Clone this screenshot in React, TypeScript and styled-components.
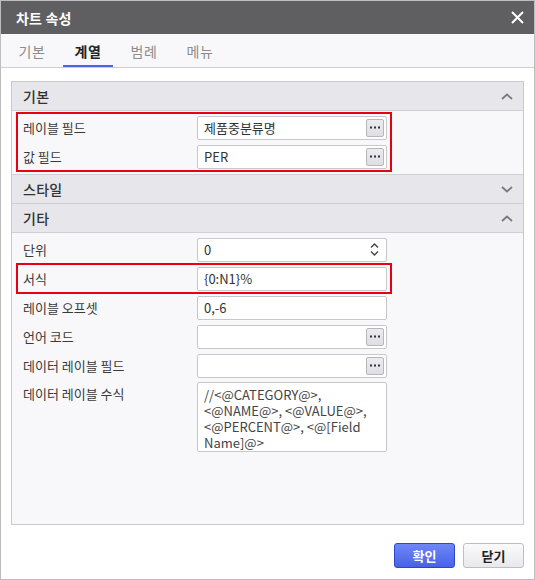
import React from "react";
import styled, { createGlobalStyle } from "styled-components";

const GlobalStyle = createGlobalStyle`
  html, body { margin: 0; padding: 0; background: #ffffff; }
  body { font-family: "Noto Sans CJK KR", "Noto Sans", sans-serif; }
  * { box-sizing: border-box; }
`;

const Window = styled.div`
  width: 535px;
  height: 580px;
  border: 1px solid #bdbdbd;
  display: flex;
  flex-direction: column;
  background: #ffffff;
`;

const TitleBar = styled.div`
  flex: none;
  height: 33px;
  background: #5f5f61;
  display: flex;
  align-items: center;
  justify-content: space-between;
  padding: 0 10px 0 15px;
`;

const Title = styled.span`
  color: #ffffff;
  font-size: 14px;
  font-weight: 700;
  letter-spacing: 0.2px;
`;

const CloseButton = styled.button`
  width: 13px;
  height: 13px;
  padding: 0;
  border: none;
  background: transparent;
  display: flex;
  cursor: pointer;
`;

const TabBar = styled.div`
  flex: none;
  height: 34px;
  background: #f8f8fa;
  border-bottom: 1px solid #cfcfd3;
  display: flex;
  gap: 6px;
  padding-left: 6px;
`;

const Tab = styled.div<{ $active?: boolean }>`
  width: 50px;
  display: flex;
  align-items: center;
  justify-content: center;
  padding-top: 3px;
  font-size: 14px;
  letter-spacing: 0.5px;
  color: ${(p) => (p.$active ? "#222222" : "#8c8c8c")};
  font-weight: ${(p) => (p.$active ? 700 : 400)};
  border-bottom: 2px solid ${(p) => (p.$active ? "#4766e3" : "transparent")};
`;

const Content = styled.div`
  flex: 1;
  display: flex;
  flex-direction: column;
  padding: 13px 10px 0;
  min-height: 0;
`;

const Panel = styled.div`
  flex: 1;
  border: 1px solid #c9c9ce;
  background: #f8f8fa;
  overflow: hidden;
`;

const Section = styled.div`
  border-bottom: 1px solid #cfcfd4;
  &:last-child { border-bottom: none; }
`;

const SectionHeader = styled.div<{ $open?: boolean }>`
  height: ${(p) => (p.$open ? 29 : 28)}px;
  background: #e6e6eb;
  border-bottom: ${(p) => (p.$open ? "1px solid #cfcfd4" : "none")};
  display: flex;
  align-items: center;
  justify-content: space-between;
  padding: 0 10px 0 11px;
  font-size: 14px;
  font-weight: 500;
  letter-spacing: 0.3px;
  color: #333333;
`;

const SectionBody = styled.div`
  padding: 2px 5px 3px;
`;

const Highlight = styled.div`
  width: 374px;
  outline: 2px solid #e60012;
  outline-offset: -1px;
`;

const Row = styled.div<{ $tall?: boolean }>`
  width: 374px;
  display: grid;
  grid-template-columns: 174px 190px;
  height: ${(p) => (p.$tall ? "auto" : "29px")};
  align-items: ${(p) => (p.$tall ? "start" : "center")};
  padding: ${(p) => (p.$tall ? "2px 4px 0 6px" : "0 4px 0 6px")};
`;

const Label = styled.span`
  font-size: 13px;
  line-height: 24px;
  color: #3a3a3a;
  white-space: nowrap;
`;

const Field = styled.div`
  height: 24px;
  border: 1px solid #c8c8cc;
  border-radius: 2px;
  background: #ffffff;
  display: flex;
  align-items: center;
  padding: 0 2px 0 6px;
`;

const FieldText = styled.span`
  flex: 1;
  font-size: 13px;
  color: #333333;
  white-space: nowrap;
  overflow: hidden;
`;

const EllipsisButton = styled.button`
  flex: none;
  width: 18px;
  height: 18px;
  padding: 0;
  border: 1px solid #b8b8bc;
  border-radius: 2px;
  background: linear-gradient(#ececf0, #dedee3);
  display: flex;
  align-items: center;
  justify-content: center;
  cursor: pointer;
`;

const Spinner = styled.div`
  flex: none;
  width: 18px;
  height: 22px;
  display: flex;
  flex-direction: column;
  align-items: center;
  justify-content: center;
  gap: 3px;
  margin-right: 1px;
`;

const TextArea = styled.div`
  height: 70px;
  border: 1px solid #c8c8cc;
  border-radius: 2px;
  background: #ffffff;
  padding: 4px 6px;
  font-size: 13px;
  line-height: 16px;
  color: #444444;
  white-space: pre-line;
  overflow: hidden;
`;

const Footer = styled.div`
  flex: none;
  height: 54px;
  display: flex;
  justify-content: flex-end;
  align-items: flex-start;
  gap: 8px;
  padding: 18px 10px 0;
`;

const Button = styled.button<{ $primary?: boolean }>`
  width: 61px;
  height: 25px;
  border-radius: 3px;
  font-family: "Noto Sans CJK KR", "Noto Sans", sans-serif;
  font-size: 13px;
  font-weight: 700;
  cursor: pointer;
  padding: 0;
  color: ${(p) => (p.$primary ? "#ffffff" : "#222222")};
  border: 1px solid ${(p) => (p.$primary ? "#2c47c6" : "#bdbdc2")};
  background: ${(p) =>
    p.$primary
      ? "linear-gradient(#6f87f7, #4862e6)"
      : "linear-gradient(#fafafb, #e9e9ed)"};
`;

const Chevron = ({ up }: { up?: boolean }) => (
  <svg width="12" height="7" viewBox="0 0 12 7">
    <polyline
      points={up ? "1,6 6,1.5 11,6" : "1,1 6,5.5 11,1"}
      fill="none"
      stroke="#7a7a7e"
      strokeWidth="1.8"
    />
  </svg>
);

const Dots = () => (
  <svg width="10" height="3" viewBox="0 0 10 3">
    <rect x="0" y="0.5" width="2" height="2" fill="#333" />
    <rect x="4" y="0.5" width="2" height="2" fill="#333" />
    <rect x="8" y="0.5" width="2" height="2" fill="#333" />
  </svg>
);

const Caret = ({ up }: { up?: boolean }) => (
  <svg width="9" height="5" viewBox="0 0 9 5">
    <polyline
      points={up ? "1,4.5 4.5,1 8,4.5" : "1,0.5 4.5,4 8,0.5"}
      fill="none"
      stroke="#444"
      strokeWidth="1.4"
    />
  </svg>
);

const TextField = ({ value, browse }: { value: string; browse?: boolean }) => (
  <Field>
    <FieldText>{value}</FieldText>
    {browse && (
      <EllipsisButton aria-label="찾아보기">
        <Dots />
      </EllipsisButton>
    )}
  </Field>
);

export default function App() {
  return (
    <>
      <GlobalStyle />
      <Window>
        <TitleBar>
          <Title>차트 속성</Title>
          <CloseButton aria-label="닫기">
            <svg width="13" height="13" viewBox="0 0 13 13">
              <path d="M1 1 L12 12 M12 1 L1 12" stroke="#ffffff" strokeWidth="2" />
            </svg>
          </CloseButton>
        </TitleBar>
        <TabBar>
          <Tab>기본</Tab>
          <Tab $active>계열</Tab>
          <Tab>범례</Tab>
          <Tab>메뉴</Tab>
        </TabBar>
        <Content>
          <Panel>
            <Section>
              <SectionHeader $open>
                <span>기본</span>
                <Chevron up />
              </SectionHeader>
              <SectionBody>
                <Highlight>
                  <Row>
                    <Label>레이블 필드</Label>
                    <TextField value="제품중분류명" browse />
                  </Row>
                  <Row>
                    <Label>값 필드</Label>
                    <TextField value="PER" browse />
                  </Row>
                </Highlight>
              </SectionBody>
            </Section>
            <Section>
              <SectionHeader>
                <span>스타일</span>
                <Chevron />
              </SectionHeader>
            </Section>
            <Section>
              <SectionHeader $open>
                <span>기타</span>
                <Chevron up />
              </SectionHeader>
              <SectionBody>
                <Row>
                  <Label>단위</Label>
                  <Field>
                    <FieldText>0</FieldText>
                    <Spinner>
                      <Caret up />
                      <Caret />
                    </Spinner>
                  </Field>
                </Row>
                <Highlight>
                  <Row>
                    <Label>서식</Label>
                    <TextField value="{0:N1}%" />
                  </Row>
                </Highlight>
                <Row>
                  <Label>레이블 오프셋</Label>
                  <TextField value="0,-6" />
                </Row>
                <Row>
                  <Label>언어 코드</Label>
                  <TextField value="" browse />
                </Row>
                <Row>
                  <Label>데이터 레이블 필드</Label>
                  <TextField value="" browse />
                </Row>
                <Row $tall>
                  <Label>데이터 레이블 수식</Label>
                  <TextArea>
                    {"//<@CATEGORY@>,\n<@NAME@>, <@VALUE@>,\n<@PERCENT@>, <@[Field\nName]@>"}
                  </TextArea>
                </Row>
              </SectionBody>
            </Section>
          </Panel>
        </Content>
        <Footer>
          <Button $primary>확인</Button>
          <Button>닫기</Button>
        </Footer>
      </Window>
    </>
  );
}
